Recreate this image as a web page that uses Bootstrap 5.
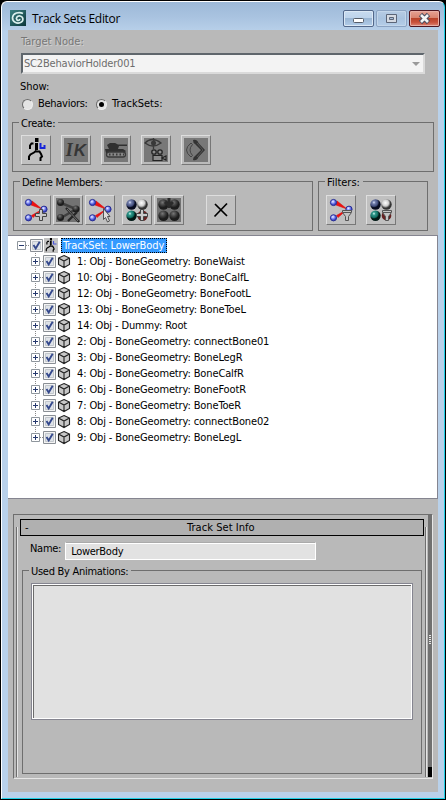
<!DOCTYPE html>
<html lang="en">
<head>
<meta charset="utf-8">
<title>Track Sets Editor</title>
<link href="https://cdn.jsdelivr.net/npm/bootstrap@5.3.0/dist/css/bootstrap.min.css" rel="stylesheet">
<style>
body{margin:0;width:446px;height:800px;overflow:hidden;background:#000;font:11px/14px "DejaVu Sans Condensed","DejaVu Sans",sans-serif;font-stretch:condensed;color:#000;letter-spacing:-.28px;white-space:nowrap}
svg{display:block;flex:none}
.win{width:444px;height:798px;margin-left:1px;margin-top:1px;border:1px solid #fff;border-right-color:#1fd0e6;border-bottom-color:#1fd0e6;border-radius:6px 6px 0 0;background:linear-gradient(#9db9d8 0,#a9c3e0 15px,#b9d1ea 30px,#b9d1ea);padding:0 6px 6px}
.titlebar{height:28px}
.titlebar h1{font:12px/15px "Open Sans","Noto Sans",sans-serif;letter-spacing:-.3px}
.client{height:762px;background:#b9b9b9}
.upper{height:205px}
.capbtn{width:31px;height:17px;border:1px solid #53688a;border-radius:2px;background:linear-gradient(#c8dbef 0,#bdd3eb 48%,#9ab6d4 50%,#b2cde9);box-shadow:inset 0 0 0 1px #dbe8f5}
.capbtn.max{border-color:#8ba3c2;background:linear-gradient(#b7cce4,#a9c3df 50%,#b5cee8);box-shadow:inset 0 0 0 1px #c3d6ea}
.capbtn.cls{border-color:#4d1520;background:linear-gradient(#e6a294 0,#d98470 45%,#b9432a 50%,#c8513c 75%,#dd8676);box-shadow:inset 0 0 0 1px #e7aea5}
.dim{color:#777;text-shadow:1px 1px #d2d2d2}
.combo{width:404px;height:21px;border:2px solid;border-color:#5f666c #dadada #dadada #5f666c;background:#f3f3f3;color:#6d6d6d}
.rad{width:11px;height:11px;border-radius:50%;border:1px solid;border-color:#6a6a6a #eee #eee #6a6a6a;background:#e4e4e4}
.rad.on::after{content:"";width:5px;height:5px;border-radius:50%;background:#000}
.grp{border:1px solid #6e6e6e}
.cap{height:12px;line-height:13px;margin-top:-6px;margin-left:6px;padding:0 3px 0 2px;background:#b9b9b9;width:max-content}
.tool{width:30px;height:30px;border:1px solid;border-color:#dedede #777 #777 #dedede;background:#c0c0c0;flex:none}
.tool.off{background:#bbb}
.tool svg{margin:-1px}
.tree{height:264px;border-top:1px solid #858590;border-right:1px solid #858590;border-bottom:1px solid #858590;background:#fff;padding-top:1px}
.noderow{height:16px}
.noderow>span:not(.sel){padding-top:1px;letter-spacing:-.13px}
.sel{height:15px;line-height:13px;width:106px;background:#3399ff;color:#fff;border:1px dotted #000;padding-left:1px;letter-spacing:-.1px;margin-left:1px}
.panel-low{margin:15px 5px 0;height:265px;border-left:1px solid #6e6e6e;border-top:1px solid #6e6e6e;border-bottom:1px solid #e6e6e6;border-right:1px solid #e6e6e6}
.roll{width:411px;height:250px;margin:12px 0 0 2px;border-left:1px solid #6e6e6e;border-right:1px solid #e4e4e4;box-shadow:inset 1px 0 #e4e4e4,inset -1px 0 #6e6e6e}
.rollhead{width:404px;height:17px;border:1px solid #000;background:#b0b0b0;margin:-8px 0 0 3px;line-height:15px}
.nameinp{width:251px;height:18px;border:1px solid #fff;border-top-color:#aaa;box-shadow:inset 0 1px #fff;background:#e2e2e2;margin-left:4px;line-height:17px;padding-left:5px}
.used{width:400px;height:204px;margin:10px 0 0 5px}
.lbox{width:382px;height:137px;margin:6px 0 0 8px;border:1px solid #858590;background:#e1e1e1;box-shadow:inset 0 0 0 1px #fff,inset 2px 2px #6c6c6c}
.sbar{width:4px;background:#707070;height:262px}
.sbar .grip{width:2px;height:9px;margin:120px 0 0 1px;background:repeating-linear-gradient(#e6e6e6 0 1px,#707070 1px 2px)}
.sbar .end{height:10px;background:#000}
#applogo{margin:8px 0 0 2px}
#wintitle{margin:9px 0 0 6px!important}
#caps{gap:2px;margin:8px -2px 0 0}
#target{padding:5px 0 0 13px;height:23px;letter-spacing:0}
#combo{margin-left:13px;padding:0 3px 0 1px;letter-spacing:-.18px}
#combo span{padding-top:1px}
#show{padding:6px 0 0 12px;height:23px;letter-spacing:0}
#radios{height:14px;padding-left:14px}
.rlab{margin-left:5px;width:59px}
.rlab+.rad{margin-left:-1px}
.rad+.rlab:last-child{letter-spacing:0}
#create{margin:11px 0 0 4px;width:422px;height:50px}
.tools{gap:10px;padding:6px 0 0 8px}
.tools2{gap:2px;padding:7px 0 0 7px}
#groups{margin:9px 0 0 5px;gap:5px}
#define{width:300px;height:50px}
#filters{width:110px;height:50px}
#filters .tools{padding:7px 0 0 7px}
#filters .cap{letter-spacing:0}
.gap7{margin-left:5px}
.gap22{margin-left:20px}
#minus{width:165px;padding-left:4px}
#rt{letter-spacing:.05px;padding-left:1px}
#namerow{margin:6px 0 0 13px;height:18px}
.fillr{height:123px}
</style>
<script src="https://cdn.jsdelivr.net/npm/bootstrap@5.3.0/dist/js/bootstrap.bundle.min.js"></script>
</head>
<body>
<svg width="0" height="0" class="position-absolute">
<defs>
<radialGradient id="gb" cx=".4" cy=".35"><stop offset="0" stop-color="#f4f6ff"/><stop offset=".5" stop-color="#8f9af8"/><stop offset="1" stop-color="#4049c8"/></radialGradient>
<radialGradient id="gn" cx=".35" cy=".3"><stop offset="0" stop-color="#dde4ff"/><stop offset=".3" stop-color="#7480ac"/><stop offset=".75" stop-color="#424d7c"/><stop offset="1" stop-color="#080c20"/></radialGradient>
<radialGradient id="gw" cx=".4" cy=".35"><stop offset="0" stop-color="#fff"/><stop offset=".6" stop-color="#d0d0d0"/><stop offset="1" stop-color="#333"/></radialGradient>
<radialGradient id="gt" cx=".35" cy=".3"><stop offset="0" stop-color="#d8fff6"/><stop offset=".3" stop-color="#32988c"/><stop offset=".75" stop-color="#116e62"/><stop offset="1" stop-color="#021815"/></radialGradient>
<radialGradient id="gd" cx=".4" cy=".3"><stop offset="0" stop-color="#777"/><stop offset=".5" stop-color="#454545"/><stop offset="1" stop-color="#1c1c1c"/></radialGradient>
<linearGradient id="logo" x2="1" y2="1"><stop offset="0" stop-color="#3b8283"/><stop offset="1" stop-color="#0a3538"/></linearGradient>
<g id="links"><path d="M11 6 21 14 10 10zM10.500 20.500 21 14.500 12 22.500z" fill="#f01010" stroke="#d80c0c" stroke-width=".6"/><g fill="url(#gb)" stroke="#20268c" stroke-width=".9"><circle cx="7.500" cy="7.500" r="3.100"/><circle cx="7.500" cy="22.800" r="3.100"/><circle cx="23" cy="14.200" r="3.100"/></g></g>
<g id="balls"><circle cx="9.500" cy="9.500" r="5.200" fill="url(#gn)"/><circle cx="20.500" cy="9.500" r="5.200" fill="url(#gw)"/><circle cx="9.500" cy="20.700" r="5.200" fill="url(#gt)"/></g>
<g id="plus"><path d="M17.500 14.500h3v4h4v3h-4v4h-3v-4h-4v-3h4z" fill="#c9c9c9" stroke="#444"/></g>
<g id="funnel"><path d="M16.500 15.500h9v2l-3 4v4h-3v-4l-3-4zM17 17.500h8" fill="#c4c4c4" stroke="#555"/></g>
<g id="cube"><path d="M7 1.500 12.500 4v6.500L7 13.500 1.500 10.500V4z" fill="#c8c8c8"/><path d="M7 1.500 12.500 4v6.500L7 13.500 1.500 10.500V4zM1.500 4 7 7l5.500-3M7 7v6.500" fill="none" stroke="#222" stroke-width="1.100"/></g>
<g id="check"><path d="M.5.500h12v12H.5z" fill="#f4f4f4" stroke="#8a8f95"/><path d="M2.500 2.500h8v8h-8z" fill="#dfe3e8" stroke="#c2c7cc"/><path d="M3.500 6 5.700 9.500 9.700 2.700" fill="none" stroke="#34488c" stroke-width="1.900"/></g>
<g id="runner"><path d="M14 3h3.500v4H14zM14 8h3v7h-3z"/><path d="M12.500 8.500H10.500L9 10.500V14M15.500 15.500 13 17.500 9.500 19.500 8 21.500V25M14 16.500H18.500L20 19 21 21.500 19.500 23V26" fill="none" stroke="#000" stroke-width="2"/></g>
</defs></svg>
<div class="win">
 <div class="titlebar d-flex align-items-start">
  <svg width="16" height="16" viewBox="0 0 16 16" id="applogo"><path d="M0 0h16v16H0z" fill="url(#logo)"/><path d="M13 3.500C9 1.500 3 3 2.500 7.500 2.200 12 7 14 10.500 12.500 14 11 13.500 6.500 10 6 7 5.700 5.500 8.500 7 10c1.200 1 3 .3 2.700-1.200" fill="none" stroke="#d9efec" stroke-width="1.700"/></svg>
  <h1 id="wintitle" class="m-0">Track Sets Editor</h1>
  <div id="caps" class="d-flex ms-auto">
   <div class="capbtn"><svg width="29" height="15"><rect x="9.500" y="7.500" width="10" height="4" rx="1" fill="#fff" stroke="#555c68"/></svg></div>
   <div class="capbtn max"><svg width="29" height="15"><path d="M9.500 3.500h10v8h-10z" fill="#d5dae2" stroke="#5b6577"/><path d="M12.500 6.500h4v2h-4z" fill="#a6bdd8" stroke="#5b6577"/></svg></div>
   <div class="capbtn cls"><svg width="29" height="15"><path d="M10.500 3.500 18.500 11.500M18.500 3.500 10.500 11.500" stroke="#4a4d60" stroke-width="4.600"/><path d="M11 4 18 11M18 4 11 11" stroke="#f4f4f4" stroke-width="2.600"/></svg></div>
  </div>
 </div>
 <div class="client">
  <div class="upper">
   <div id="target" class="dim">Target Node:</div>
   <div id="combo" class="combo d-flex align-items-center justify-content-between"><span>SC2BehaviorHolder001</span><svg width="8" height="4"><path d="M0 0h8L4 4z" fill="#999"/></svg></div>
   <div id="show">Show:</div>
   <div id="radios" class="d-flex align-items-center"><span class="rad"></span><span class="rlab">Behaviors:</span><span class="rad on d-flex align-items-center justify-content-center"></span><span class="rlab">TrackSets:</span></div>
   <div id="create" class="grp"><div class="cap">Create:</div>
    <div class="d-flex tools">
     <div class="tool"><svg width="30" height="30"><use href="#runner"/><path d="M19.500 8v5h4v-3" fill="none" stroke="#1725d8" stroke-width="2"/></svg></div>
     <div class="tool off"><svg width="30" height="30"><path d="M3 3h24v24H3z" fill="#787878"/><text x="15.500" y="21" text-anchor="middle" font-family="Liberation Sans,sans-serif" font-size="17" font-style="italic" font-weight="bold" letter-spacing="1" fill="#363636"><tspan font-family="Liberation Serif,serif" font-size="18">I</tspan>K</text></svg></div>
     <div class="tool off"><svg width="30" height="30"><path d="M3 3h24v24H3z" fill="#787878"/><path d="M6 10l3-2h5l3 1.500h9v1.500h-8l-1 3H8zM4 14h18l3 2-2 2H5z" fill="#303030"/><rect x="5.500" y="17" width="19" height="5" rx="2.500" fill="#858585" stroke="#3a3a3a" stroke-width="1.300"/><path d="M8 19.500h15" stroke="#3a3a3a" stroke-width="2" stroke-dasharray="1.500 2"/></svg></div>
     <div class="tool off"><svg width="30" height="30"><path d="M3 3h24v24H3z" fill="#787878"/><path d="M4 8q7-7 16 0-8 6-16 0zM12.500 3v11" fill="none" stroke="#383838" stroke-width="1.300"/><circle cx="12.500" cy="8" r="2.500" fill="#383838"/><circle cx="13" cy="17" r="2.200" fill="#8c8c8c" stroke="#222" stroke-width="1.300"/><circle cx="19" cy="17" r="2.200" fill="#8c8c8c" stroke="#222" stroke-width="1.300"/><path d="M12 20.500h9v5h-9zM21 23l4-2v4z" fill="#8c8c8c" stroke="#222" stroke-width="1.200"/></svg></div>
     <div class="tool off"><svg width="30" height="30"><path d="M3 3h24v24H3z" fill="#787878"/><path d="M10 8q-9 7 0 14l1.500-1.500q-5-5.500 0-11z" fill="#777" stroke="#444"/><path d="M12 5q4-1 5.500 3l6.500 7-6.500 7q-1.500 4-5.500 3 0-3 2-4l6-6-6-6q-2-1-2-4z" fill="#333"/><path d="M16 8l6 7-6 7" fill="none" stroke="#555"/></svg></div>
    </div></div>
   <div id="groups" class="d-flex">
    <div id="define" class="grp"><div class="cap">Define Members:</div>
     <div class="d-flex tools2">
      <div class="tool"><svg width="30" height="30"><use href="#links"/><use href="#plus" x="1"/></svg></div>
      <div class="tool off"><svg width="30" height="30"><path d="M3 3h24v24H3z" fill="#727272"/><path d="M8 8 23 14 8 23" stroke="#404040" stroke-width="2.500" fill="none"/><g fill="url(#gd)"><circle cx="7.500" cy="7.500" r="3.500"/><circle cx="7.500" cy="22.500" r="3.500"/><circle cx="23" cy="14" r="3.500"/></g><path d="M13 13 26 27M24 17 15 26" stroke="#252525" stroke-width="2.300"/><path d="M14 14 25 26" stroke="#888" stroke-width=".8"/></svg></div>
      <div class="tool"><svg width="30" height="30"><use href="#links"/><path d="M18.500 13.500v11l2-2 2 4.500 2-1-2-4.500h2.500z" fill="#ddd" stroke="#444" stroke-width=".9"/></svg></div>
      <div class="tool gap7"><svg width="30" height="30"><use href="#balls"/><circle cx="20.500" cy="20.700" r="5.200" fill="#652222"/><use href="#plus" x="1"/></svg></div>
      <div class="tool off"><svg width="30" height="30"><path d="M3 3h24v24H3z" fill="#727272"/><g fill="url(#gd)"><circle cx="9.500" cy="9.500" r="5.200"/><circle cx="20.500" cy="9.500" r="5.200"/><circle cx="9.500" cy="20.700" r="5.200"/><circle cx="20.500" cy="20.700" r="5.200"/></g><path d="M15 3v10M11 7l4 4 4-4" stroke="#2a2a2a" stroke-width="3" fill="none"/></svg></div>
      <div class="tool gap22"><svg width="30" height="30"><path d="M9 9 21 21M21 8.500 8.500 21.500" stroke="#000" stroke-width="1.700"/></svg></div>
     </div></div>
    <div id="filters" class="grp"><div class="cap">Filters:</div>
     <div class="d-flex tools">
      <div class="tool"><svg width="30" height="30"><use href="#links"/><use href="#funnel"/></svg></div>
      <div class="tool"><svg width="30" height="30"><use href="#balls"/><circle cx="20.500" cy="20.700" r="4.800" fill="#652222"/><use href="#funnel"/></svg></div>
     </div></div>
   </div>
  </div>
  <div class="tree" id="tree">
   <div class="noderow d-flex align-items-center" id="rootrow"><svg width="52" height="16"><path d="M9.500 4.500h8v8h-8z" fill="#fff" stroke="#8f969d"/><path d="M11 8.500h5" stroke="#26396e"/><path d="M18 8.500h4" stroke="#888" stroke-dasharray="1 1"/><use href="#check" x="22" y="2"/><path d="M36 1h14v15H36z" fill="#c3c3c3"/><use href="#runner" transform="translate(33.500 -.8) scale(.6)"/><path d="M45.500 4v3h3" fill="none" stroke="#4a55d8" stroke-width="1.200"/></svg><span class="sel">TrackSet: LowerBody</span></div>
  </div>
  <div class="panel-low d-flex justify-content-between">
   <div class="roll">
    <div class="rollhead d-flex"><span id="minus">-</span><span id="rt">Track Set Info</span></div>
    <div id="namerow" class="d-flex"><span>Name:</span><div class="nameinp">LowerBody</div></div>
    <div class="grp used"><div class="cap">Used By Animations:</div><div class="lbox"></div></div>
   </div>
   <div class="sbar d-flex flex-column"><div class="grip"></div><div class="fillr"></div><div class="end"></div></div>
  </div>
 </div>
</div>
<script>
// Child nodes of the track set
const names=["1: Obj - BoneGeometry: BoneWaist","10: Obj - BoneGeometry: BoneCalfL","12: Obj - BoneGeometry: BoneFootL","13: Obj - BoneGeometry: BoneToeL","14: Obj - Dummy: Root","2: Obj - BoneGeometry: connectBone01","3: Obj - BoneGeometry: BoneLegR","4: Obj - BoneGeometry: BoneCalfR","6: Obj - BoneGeometry: BoneFootR","7: Obj - BoneGeometry: BoneToeR","8: Obj - BoneGeometry: connectBone02","9: Obj - BoneGeometry: BoneLegL"];
const tree=document.getElementById("tree");
names.forEach((n,i)=>{tree.insertAdjacentHTML("beforeend",`<div class="noderow d-flex align-items-center"><svg width="69" height="16"><path d="M27.500 0V${i<11?16:5}M32 8.500h4" stroke="#888" stroke-dasharray="1 1"/><path d="M23.500 4.500h8v8h-8z" fill="#fff" stroke="#8f969d"/><path d="M25 8.500h5M27.500 6v5" stroke="#26396e"/><use href="#check" x="35" y="2"/><use href="#cube" x="49" y="1"/></svg><span>${n}</span></div>`)});
</script>
</body>
</html>
